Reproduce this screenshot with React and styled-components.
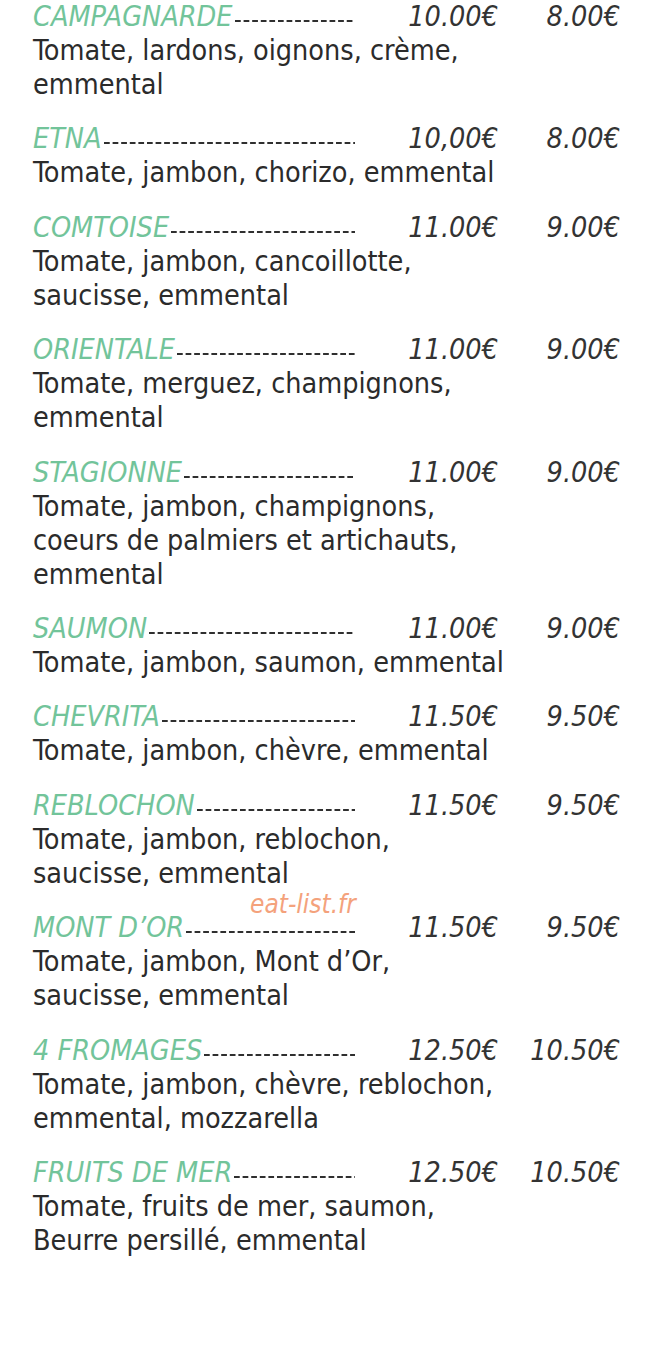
import React from 'react'
import styled, { createGlobalStyle } from 'styled-components'

const GlobalStyle = createGlobalStyle`
  html, body {
    margin: 0;
    padding: 0;
    background: #fff;
  }
  body {
    font-family: "DejaVu Sans Condensed", "DejaVu Sans", sans-serif;
  }
`

const pizzas = [
  { name: 'CAMPAGNARDE', big: '10.00€', small: '8.00€', desc: ['Tomate, lardons, oignons, crème,', 'emmental'] },
  { name: 'ETNA', big: '10,00€', small: '8.00€', desc: ['Tomate, jambon, chorizo, emmental'] },
  { name: 'COMTOISE', big: '11.00€', small: '9.00€', desc: ['Tomate, jambon, cancoillotte,', 'saucisse, emmental'] },
  { name: 'ORIENTALE', big: '11.00€', small: '9.00€', desc: ['Tomate, merguez, champignons,', 'emmental'] },
  { name: 'STAGIONNE', big: '11.00€', small: '9.00€', desc: ['Tomate, jambon, champignons,', 'coeurs de palmiers et artichauts,', 'emmental'] },
  { name: 'SAUMON', big: '11.00€', small: '9.00€', desc: ['Tomate, jambon, saumon, emmental'] },
  { name: 'CHEVRITA', big: '11.50€', small: '9.50€', desc: ['Tomate, jambon, chèvre, emmental'] },
  { name: 'REBLOCHON', big: '11.50€', small: '9.50€', desc: ['Tomate, jambon, reblochon,', 'saucisse, emmental'] },
  { name: 'MONT D’OR', big: '11.50€', small: '9.50€', desc: ['Tomate, jambon, Mont d’Or,', 'saucisse, emmental'], mark: true },
  { name: '4 FROMAGES', big: '12.50€', small: '10.50€', desc: ['Tomate, jambon, chèvre, reblochon,', 'emmental, mozzarella'] },
  { name: 'FRUITS DE MER', big: '12.50€', small: '10.50€', desc: ['Tomate, fruits de mer, saumon,', 'Beurre persillé, emmental'] },
]

export default function App() {
  return (
    <>
      <GlobalStyle />
      <Menu>
        {pizzas.map((p) => (
          <Item key={p.name}>
            {p.mark && <Watermark>eat-list.fr</Watermark>}
            <TitleRow>
              <NameCell>
                <Name>{p.name}</Name>
                <Dashes />
              </NameCell>
              <Price>{p.big}</Price>
              <Price>{p.small}</Price>
            </TitleRow>
            {p.desc.map((line) => (
              <Line key={line}>{line}</Line>
            ))}
          </Item>
        ))}
      </Menu>
    </>
  )
}

const Menu = styled.div`
  width: 661px;
  min-height: 1352px;
  box-sizing: border-box;
  padding: 0 0 0 33px;
  display: flex;
  flex-direction: column;
  gap: 20.4px;
  color: #2b2b2b;
  font-size: 28.5px;
  line-height: 34px;
`

const Item = styled.div`
  position: relative;
  display: flex;
  flex-direction: column;
`

const TitleRow = styled.div`
  display: grid;
  grid-template-columns: 322px 143px 122px;
  height: 34px;
  align-items: center;
`

const NameCell = styled.div`
  display: flex;
  align-items: center;
  height: 34px;
`

const Name = styled.span`
  color: #72c49a;
  font-style: italic;
  flex: none;
  white-space: nowrap;
`

const Dashes = styled.span`
  flex: 1;
  align-self: stretch;
  margin: 0 0 0 2px;
  background-image: linear-gradient(to right, #2f2f2f 0 5.5px, transparent 5.5px 8.6px);
  background-size: 8.6px 2px;
  background-repeat: repeat-x;
  background-position: left 20px;
`

const Price = styled.span`
  font-style: italic;
  text-align: right;
  color: #333;
  white-space: nowrap;
`

const Line = styled.div`
  white-space: nowrap;
`

const Watermark = styled.span`
  position: absolute;
  left: 217px;
  top: -24px;
  color: #f4a27c;
  font-style: italic;
  font-size: 26px;
  line-height: 34px;
`
